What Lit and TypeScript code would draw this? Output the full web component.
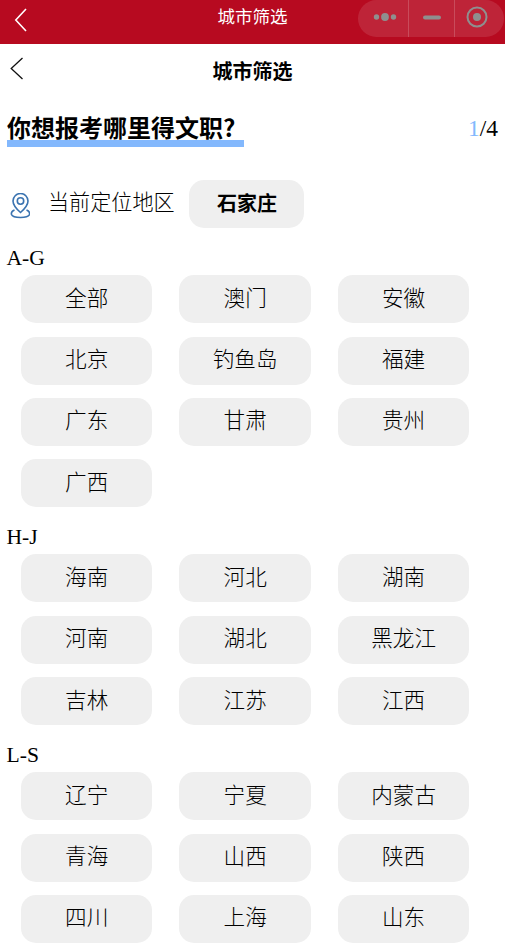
import { LitElement, html, css } from "lit";
import { customElement } from "lit/decorators.js";

const groups: [string, string[]][] = [
  ["A-G", ["全部", "澳门", "安徽", "北京", "钓鱼岛", "福建", "广东", "甘肃", "贵州", "广西"]],
  ["H-J", ["海南", "河北", "湖南", "河南", "湖北", "黑龙江", "吉林", "江苏", "江西"]],
  ["L-S", ["辽宁", "宁夏", "内蒙古", "青海", "山西", "陕西", "四川", "上海", "山东"]],
];

@customElement("app-root")
export class AppRoot extends LitElement {
  static styles = css`
    :host { display: block; width: 505px; height: 952px; overflow: hidden; background: #fff; color: #000;
      font-family: "Liberation Serif", "Noto Sans CJK SC", serif; }
    .top { height: 44px; background: #b70a20; display: flex; align-items: center; position: relative; color: #fff; }
    .top .back { margin-left: 14px; margin-top: -4px; display: block; }
    .top .title { position: absolute; left: 0; width: 505px; top: 4px; text-align: center; font-size: 17.5px; line-height: 26px; font-weight: 400; }
    .capsule { position: absolute; left: 358px; top: 0; width: 146px; height: 37px; border-radius: 19px; background: rgba(255,255,255,.11);
      display: flex; box-sizing: border-box; }
    .capsule div { display: flex; align-items: center; justify-content: center; height: 37px; box-sizing: border-box; padding-bottom: 3px; }
    .capsule .c1 { width: 51px; border-right: 1px solid rgba(255,255,255,.18); padding-left: 6px; padding-right: 2px; }
    .capsule .c2 { width: 46px; border-right: 1px solid rgba(255,255,255,.18); }
    .capsule .c3 { flex: 1; padding-right: 5px; }
    .nav { height: 56px; position: relative; display: flex; align-items: center; justify-content: center; }
    .nav .back { position: absolute; left: 10px; top: 13px; }
    .nav .title { font-size: 20px; font-weight: 700; line-height: 28px; }
    .head { display: flex; justify-content: space-between; align-items: flex-start; height: 80px; padding: 0 7px; }
    .qwrap { position: relative; z-index: 0; margin-top: 10px; width: 237px; height: 37px; }
    .q { font-size: 24px; font-weight: 700; font-family: "Noto Sans CJK SC", sans-serif; line-height: 34px; white-space: nowrap; }
    .qwrap::after { content: ""; position: absolute; left: 0; right: 0; top: 30px; height: 7px; background: #83b8fd; z-index: -1; }
    .page { font-size: 23.5px; line-height: 26px; margin-top: 15px; }
    .page b { font-weight: 400; color: #83b8fd; }
    .loc { display: flex; align-items: center; height: 48px; padding-left: 10px; }
    .loc svg { display: block; margin-top: 3px; }
    .loc .t { margin-left: 18px; font-size: 21.1px; line-height: 28px; font-weight: 300; margin-top: -3px; }
    .cur { margin-left: 14.5px; width: 115px; height: 48px; border-radius: 15px; background: #efefef; font-size: 20px; font-weight: 700; box-sizing: border-box; padding: 0 0 4px 1px;
      display: flex; align-items: center; justify-content: center; }
    .group { padding-left: 7px; }
    .label { font-size: 21.6px; line-height: 22px; height: 28px; margin-left: -0.5px; }
    .grid { display: grid; grid-template-columns: repeat(3, 131.3px); column-gap: 27.2px; row-gap: 13.3px; padding-left: 14px; }
    .cell { height: 48px; border-radius: 15px; background: #efefef; font-size: 21.6px; font-weight: 300; box-sizing: border-box; padding-bottom: 6px; display: flex; align-items: center; justify-content: center; }
    .groups { margin-top: 19.4px; display: flex; flex-direction: column; gap: 19.2px; }
  `;

  render() {
    return html`
      <div class="top">
        <svg class="back" width="14" height="26" viewBox="0 0 14 26" fill="none" stroke="#fff" stroke-width="1.6"><path d="M12 2 L1.8 13 L12 24"/></svg>
        <div class="title">城市筛选</div>
        <div class="capsule">
          <div class="c1"><svg width="26" height="10" viewBox="0 0 26 10" fill="#8f8f8f"><circle cx="4.5" cy="5" r="2.7"/><circle cx="13" cy="5" r="3.9"/><circle cx="21.5" cy="5" r="2.7"/></svg></div>
          <div class="c2"><svg width="18" height="5" viewBox="0 0 18 5"><rect width="18" height="4" y=".5" rx="2" fill="#8f8f8f"/></svg></div>
          <div class="c3"><svg width="22" height="22" viewBox="0 0 22 22"><circle cx="11" cy="11" r="9.5" fill="none" stroke="#8f8f8f" stroke-width="2"/><circle cx="11" cy="11" r="4" fill="#8f8f8f"/></svg></div>
        </div>
      </div>
      <div class="nav">
        <svg class="back" width="14" height="24" viewBox="0 0 14 24" fill="none" stroke="#111" stroke-width="1.3"><path d="M12.5 1 L1.2 11.5 L12.5 22"/></svg>
        <div class="title">城市筛选</div>
      </div>
      <div class="head">
        <div class="qwrap"><div class="q">你想报考哪里得文职?</div></div>
        <div class="page"><b>1</b>/4</div>
      </div>
      <div class="loc">
        <svg width="20" height="26" viewBox="0 0 20 26" fill="none" stroke="#3a73b0" stroke-width="1.6">
          <path d="M10.5 19.5 C6.5 16 3 12.5 3 8 A7.5 7.5 0 0 1 18 8 C18 12.5 14.5 16 10.5 19.5 Z"/>
          <circle cx="10.5" cy="8" r="3.2"/>
          <path d="M4.5 17 C2 18 1 19.5 1.5 21.5 C3 25.5 18 25.5 19.5 21.5 C20 19.5 19 18 16.5 17"/>
        </svg>
        <div class="t">当前定位地区</div>
        <div class="cur">石家庄</div>
      </div>
      <div class="groups">
        ${groups.map(([l, items]) => html`
          <div class="group">
            <div class="label">${l}</div>
            <div class="grid">${items.map((i) => html`<div class="cell">${i}</div>`)}</div>
          </div>`)}
      </div>
    `;
  }
}
